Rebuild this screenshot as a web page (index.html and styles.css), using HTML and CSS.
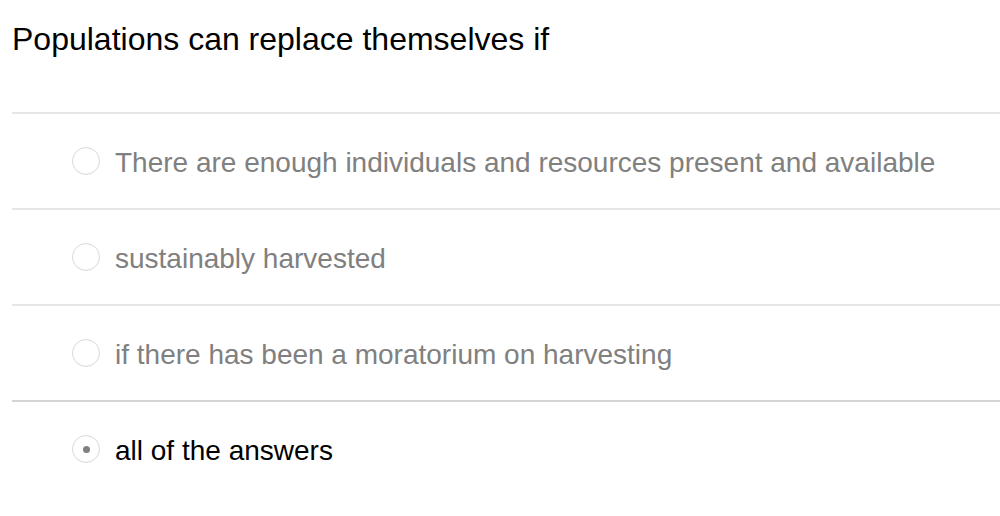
FILE: index.html
```html
<!DOCTYPE html>
<html>
<head>
<meta charset="utf-8">
<link rel="stylesheet" href="styles.css">
</head>
<body>
<div class="quiz">
  <h1 class="question">Populations can replace themselves if</h1>
  <ul class="options">
    <li class="option"><span class="radio"></span><span class="label">There are enough individuals and resources present and available</span></li>
    <li class="option"><span class="radio"></span><span class="label">sustainably harvested</span></li>
    <li class="option"><span class="radio"></span><span class="label">if there has been a moratorium on harvesting</span></li>
    <li class="option selected"><span class="radio"></span><span class="label">all of the answers</span></li>
  </ul>
</div>
</body>
</html>
```

FILE: styles.css
```css
html, body {
  margin: 0;
  padding: 0;
  background: #fff;
}
body {
  font-family: "Liberation Sans", Arial, sans-serif;
}
.quiz {
  padding-left: 12px;
}
.question {
  margin: 0;
  padding-top: 21px;
  height: 112px;
  box-sizing: border-box;
  font-size: 32px;
  font-weight: normal;
  color: #000;
  line-height: 37px;
}
.options {
  list-style: none;
  margin: 0;
  padding: 0;
}
.option {
  display: flex;
  align-items: center;
  height: 94px;
  border-top: 2px solid #e6e6e6;
  padding-left: 60px;
}
.option.selected {
  border-top-color: #d4d4d4;
}
.radio {
  width: 28px;
  height: 28px;
  box-sizing: border-box;
  border: 1px solid #dadada;
  border-radius: 50%;
  background: #fff;
  box-shadow: inset 0 -1px 1px rgba(0,0,0,0.03);
  margin-right: 15px;
  flex: none;
  display: flex;
  align-items: center;
  justify-content: center;
}
.selected .radio::after {
  content: "";
  width: 7px;
  height: 7px;
  border-radius: 50%;
  background: #808080;
}
.label {
  font-size: 28px;
  color: #808080;
  line-height: 32px;
  margin-top: 4px;
}
.selected .label {
  color: #000;
}
```
